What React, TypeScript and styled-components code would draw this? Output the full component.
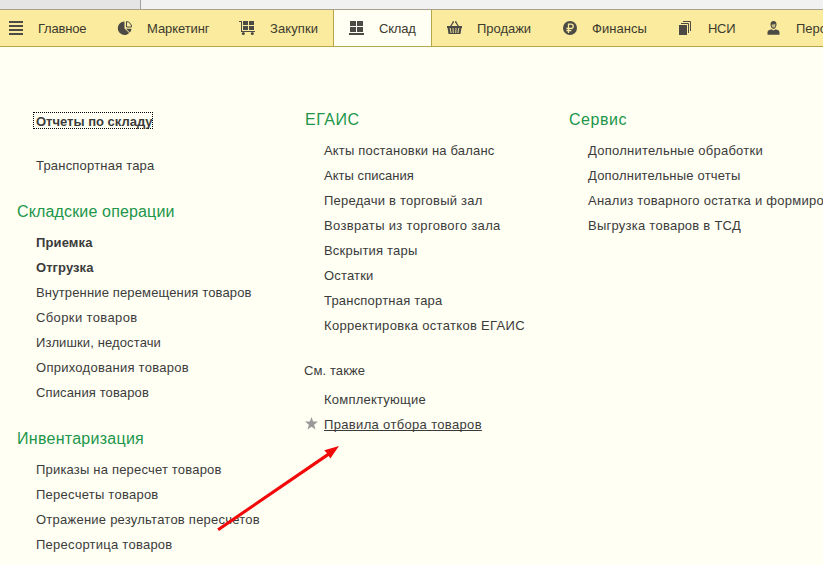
import React from 'react';
import styled, { createGlobalStyle } from 'styled-components';

const GlobalStyle = createGlobalStyle`
  * { box-sizing: border-box; }
  body { margin: 0; background: #fffff3; overflow: hidden; }
`;

const Page = styled.div`
  position: relative;
  width: 823px;
  height: 565px;
  overflow: hidden;
  display: flex;
  flex-direction: column;
  background: #fffff3;
  color: #3b3b3b;
  font: 13px/25px 'Liberation Sans', Arial, sans-serif;
  white-space: nowrap;
`;

const WindowStrip = styled.div`
  display: flex;
  flex: none;
  height: 9px;
  background: #f1f1f1;
`;

const WindowTab = styled.div`
  width: 141px;
  background: #e5e5e5;
  border-right: 1px solid #a0a0a0;
`;

const SectionBar = styled.nav`
  display: flex;
  flex: none;
  height: 38px;
  padding-left: 8px;
  background: #faeb9e;
  border-top: 1px solid #a6a08c;
  border-bottom: 1px solid #b5a748;
`;

const Section = styled.a<{ $width: number; $active?: boolean; $first?: boolean }>`
  display: flex;
  flex: none;
  align-items: center;
  gap: ${(p) => (p.$first ? 13 : 14)}px;
  width: ${(p) => p.$width}px;
  padding-left: ${(p) => (p.$first ? 1 : 16)}px;
  background: ${(p) => (p.$active ? '#fffff3' : 'transparent')};
  box-shadow: ${(p) => (p.$active ? 'inset 1px 0 #b5a748, 1px 0 #b5a748' : 'none')};
  color: #3d3a2e;
`;

const SectionIcon = styled.svg`
  flex: none;
  width: 16px;
  height: 16px;
  fill: #4b4a44;
`;

const Text = styled.span<{ $track: number }>`
  letter-spacing: ${(p) => p.$track}px;
`;

const Menu = styled.main`
  display: grid;
  grid-template-columns: 288px 264px 400px;
  padding-left: 17px;
`;

const Column = styled.div<{ $top: number }>`
  display: flex;
  flex-direction: column;
  gap: 21px;
  padding-top: ${(p) => p.$top}px;
`;

const Reports = styled.div`
  display: flex;
  flex-direction: column;
  align-items: flex-start;
  gap: 24px;
  padding-left: 16px;
`;

const FocusedLink = styled.a`
  height: 17px;
  width: 120px;
  padding-left: 2px;
  border: 1px dotted #000;
  font-weight: bold;
  line-height: 17px;
`;

const PlainLink = styled.a`
  padding-left: 3px;
`;

const Group = styled.section`
  display: flex;
  flex-direction: column;
`;

const GroupTitle = styled.h2`
  height: 31px;
  margin: 0;
  color: #21964b;
  font-size: 16px;
  font-weight: normal;
  line-height: 25px;
`;

const SeeAlsoTitle = styled.h3`
  height: 29px;
  margin: -1px 0 0 -1px;
  font-size: 13px;
  font-weight: normal;
`;

const Item = styled.a<{ $bold?: boolean }>`
  display: flex;
  align-items: center;
  height: 25px;
  padding-left: 19px;
  font-weight: ${(p) => (p.$bold ? 'bold' : 'normal')};
`;

const StarredItem = styled(Item)`
  padding-left: 0;
  text-decoration: underline;
  text-decoration-skip-ink: none;
  text-underline-offset: 1px;
`;

const Star = styled.svg`
  width: 13px;
  height: 13px;
  margin: -2px 6px 0 0;
  fill: #999;
`;

const Arrow = styled.svg`
  position: absolute;
  left: 210px;
  top: 440px;
  width: 140px;
  height: 100px;
  fill: #f20a0a;
`;

type Entry = [label: string, track: number, bold?: boolean];

const ICONS = {
  main: <path d="M0 1h14v2H0zM0 5h14v2H0zM0 9h14v2H0zM0 13h14v2H0z" shapeRendering="crispEdges" />,
  pie: (
    <>
      <path d="M7.500 1.500a6.700 6.700 0 1 0 4.700 11.500L7.500 8.400z" />
      <path d="M9.500 1.600a5.200 5.200 0 0 1 5 5.400h-5z" fill="none" stroke="#4b4a44" />
      <path d="M9 8.700h5.500a6.400 6.400 0 0 1-1.700 3.800z" />
    </>
  ),
  cart: (
    <>
      <path d="M-1 1h3v10h13v1H1V2h-2zM3 1h5v4H3zM9 1h5v4H9zM3 6h5v4H3zM9 6h5v4H9z" shapeRendering="crispEdges" />
      <circle cx="3.3" cy="13.5" r="1.5" />
      <circle cx="12.3" cy="13.5" r="1.5" />
    </>
  ),
  stock: <path d="M1 1h6v5H1zM8 1h6v5H8zM1 7h6v5H1zM8 7h6v5H8zM0 13h15v2H0z" shapeRendering="crispEdges" />,
  basket: (
    <>
      <path d="M3.500 6.500L6 2.500M11.500 6.500L9 2.500M5.500 2h1.500M8 2h1.500" fill="none" stroke="#4b4a44" strokeWidth="1.300" />
      <path d="M0 6h15v2h-.6L13.500 14H1.500L.6 8H0z" />
      <path d="M3.200 8l.9 5M6 8l.3 5M9 8l-.3 5M11.800 8l-.9 5" stroke="#faeb9e" strokeWidth=".9" />
    </>
  ),
  ruble: (
    <>
      <circle cx="8" cy="8" r="7" />
      <path d="M6.500 13V4.200h2.600a2.100 2.100 0 0 1 0 4.300H4.400M4.400 10.700h5" fill="none" stroke="#faeb9e" strokeWidth="1.300" />
    </>
  ),
  papers: (
    <>
      <path d="M1 5h8v10H1z" />
      <path d="M3 3.500h7.500V13M5 1.500h7.500V11" fill="none" stroke="#4b4a44" />
    </>
  ),
  person: (
    <>
      <path d="M7.500 1C5.300 1 4.500 2.500 4.500 4.500S5.800 9 7.500 9s3-2.500 3-4.500S9.700 1 7.500 1z" />
      <path d="M5.600 4.500c1.400.2 2.800-.3 3.300-1 .4.600.6 1.300.5 2C9.200 7 8.500 7.800 7.500 7.800S5.700 6.500 5.600 4.500z" fill="#c3b881" />
      <path d="M1.500 14.800v-2.600c0-1.800 2-2.300 4-2.900 1 1.200 3 1.200 4 0 2 .6 4 1.100 4 2.900v2.600z" />
    </>
  ),
};

const SECTIONS: { label: string; icon: keyof typeof ICONS; width: number; track: number; active?: boolean }[] = [
  { label: 'Главное', icon: 'main', width: 93, track: -0.2 },
  { label: 'Маркетинг', icon: 'pie', width: 123, track: -0.08 },
  { label: 'Закупки', icon: 'cart', width: 109, track: 0.09 },
  { label: 'Склад', icon: 'stock', width: 98, track: -0.2, active: true },
  { label: 'Продажи', icon: 'basket', width: 115, track: -0.04 },
  { label: 'Финансы', icon: 'ruble', width: 116, track: 0.06 },
  { label: 'НСИ', icon: 'papers', width: 88, track: -0.3 },
  { label: 'Персонал', icon: 'person', width: 120, track: 0 },
];

const OPERATIONS: Entry[] = [
  ['Приемка', 0.12, true],
  ['Отгрузка', 0.07, true],
  ['Внутренние перемещения товаров', 0.14],
  ['Сборки товаров', 0.38],
  ['Излишки, недостачи', 0.12],
  ['Оприходования товаров', 0.27],
  ['Списания товаров', 0.13],
];
const INVENTORY: Entry[] = [
  ['Приказы на пересчет товаров', 0.19],
  ['Пересчеты товаров', 0.25],
  ['Отражение результатов пересчетов', 0.24],
  ['Пересортица товаров', 0.25],
];
const EGAIS: Entry[] = [
  ['Акты постановки на баланс', 0.18],
  ['Акты списания', 0.04],
  ['Передачи в торговый зал', 0.23],
  ['Возвраты из торгового зала', 0.34],
  ['Вскрытия тары', 0.2],
  ['Остатки', 0.18],
  ['Транспортная тара', 0.2],
  ['Корректировка остатков ЕГАИС', 0.32],
];
const SERVICE: Entry[] = [
  ['Дополнительные обработки', 0.25],
  ['Дополнительные отчеты', 0.2],
  ['Анализ товарного остатка и формирование', 0.25],
  ['Выгрузка товаров в ТСД', 0.25],
];

function MenuGroup({ title, track, items }: { title: string; track: number; items: Entry[] }) {
  return (
    <Group>
      <GroupTitle><Text $track={track}>{title}</Text></GroupTitle>
      {items.map(([label, spacing, bold]) => (
        <Item key={label} $bold={bold}><Text $track={spacing}>{label}</Text></Item>
      ))}
    </Group>
  );
}

export default function App() {
  return (
    <Page>
      <GlobalStyle />
      <WindowStrip><WindowTab /></WindowStrip>
      <SectionBar>
        {SECTIONS.map((s, i) => (
          <Section key={s.label} $width={s.width} $active={s.active} $first={i === 0}>
            <SectionIcon viewBox="0 0 16 16" overflow="visible">{ICONS[s.icon]}</SectionIcon>
            <Text $track={s.track}>{s.label}</Text>
          </Section>
        ))}
      </SectionBar>
      <Menu>
        <Column $top={65}>
          <Reports>
            <FocusedLink>Отчеты по складу</FocusedLink>
            <PlainLink><Text $track={0.2}>Транспортная тара</Text></PlainLink>
          </Reports>
          <MenuGroup title="Складские операции" track={0.15} items={OPERATIONS} />
          <MenuGroup title="Инвентаризация" track={0.27} items={INVENTORY} />
        </Column>
        <Column $top={60}>
          <MenuGroup title="ЕГАИС" track={0.5} items={EGAIS} />
          <Group>
            <SeeAlsoTitle><Text $track={0.09}>См. также</Text></SeeAlsoTitle>
            <Item><Text $track={0.23}>Комплектующие</Text></Item>
            <StarredItem>
              <Star viewBox="0 0 13 13"><path d="M6.500 0L8.100 4.500 13 4.600 9.100 7.700 10.500 12.500 6.500 9.700 2.500 12.500 3.900 7.700 0 4.600 4.900 4.500z" /></Star>
              <Text $track={0.34}>Правила отбора товаров</Text>
            </StarredItem>
          </Group>
        </Column>
        <Column $top={60}>
          <MenuGroup title="Сервис" track={0.54} items={SERVICE} />
        </Column>
      </Menu>
      <Arrow viewBox="210 440 140 100">
        <path d="M217.200 528.500L327 453.300 324.300 450.300 339 446 330.300 458.500 328.800 455.900 219 531z" />
      </Arrow>
    </Page>
  );
}
